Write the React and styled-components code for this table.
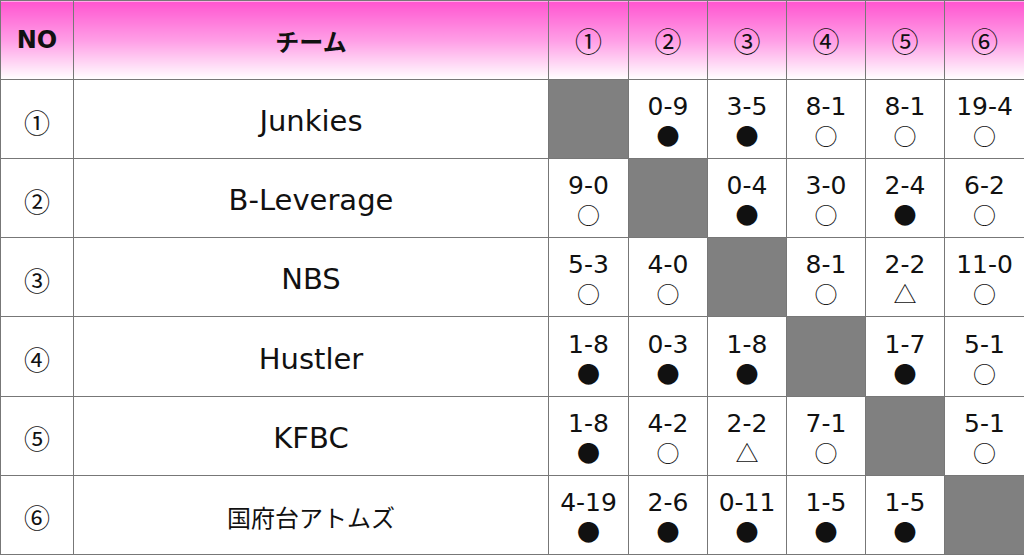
import React from 'react';
import styled, { createGlobalStyle } from 'styled-components';

const GlobalStyle = createGlobalStyle`
  body {
    margin: 0;
    background: #ffffff;
    font-family: "DejaVu Sans", "Noto Sans CJK JP", sans-serif;
  }
`;

const Table = styled.table`
  width: 1024px;
  height: 555px;
  border-collapse: collapse;
  table-layout: fixed;
  color: #111;
`;

const Col = styled.col`
  width: ${(p) => p.$w}px;
`;

const HeadCell = styled.th`
  height: 78px;
  border: 1px solid #777;
  background: linear-gradient(to bottom, #ff55d0 0%, #ff9ee6 50%, #ffffff 100%);
  font-family: ${(p) => (p.$latin ? '"DejaVu Sans"' : '"Noto Sans CJK JP"')}, sans-serif;
  font-size: ${(p) => (p.$num ? '27px' : '24px')};
  font-weight: ${(p) => (p.$num ? 400 : 700)};
  text-align: center;
  padding: 0;
`;

const Cell = styled.td`
  border: 1px solid #777;
  background: ${(p) => (p.$self ? '#808080' : '#ffffff')};
  text-align: center;
  padding: 4px 0 0;
  font-size: 29px;
`;

const NoCell = styled(Cell)`
  font-family: "Noto Sans CJK JP", sans-serif;
  font-size: 26px;
`;

const NameCell = styled(Cell)`
  font-size: ${(p) => (p.$jp ? '24px' : '29px')};
`;

const Score = styled.div`
  font-size: 25px;
  line-height: 29px;
`;

const Mark = styled.div`
  font-family: "Noto Sans CJK JP", sans-serif;
  font-size: 23px;
  line-height: 29px;
`;

const nums = ['①', '②', '③', '④', '⑤', '⑥'];
const widths = [73, 475, 80, 79, 79, 79, 79, 80];

const teams = [
  { name: 'Junkies', res: [null, ['0-9', '●'], ['3-5', '●'], ['8-1', '○'], ['8-1', '○'], ['19-4', '○']] },
  { name: 'B-Leverage', res: [['9-0', '○'], null, ['0-4', '●'], ['3-0', '○'], ['2-4', '●'], ['6-2', '○']] },
  { name: 'NBS', res: [['5-3', '○'], ['4-0', '○'], null, ['8-1', '○'], ['2-2', '△'], ['11-0', '○']] },
  { name: 'Hustler', res: [['1-8', '●'], ['0-3', '●'], ['1-8', '●'], null, ['1-7', '●'], ['5-1', '○']] },
  { name: 'KFBC', res: [['1-8', '●'], ['4-2', '○'], ['2-2', '△'], ['7-1', '○'], null, ['5-1', '○']] },
  { name: '国府台アトムズ', jp: true, res: [['4-19', '●'], ['2-6', '●'], ['0-11', '●'], ['1-5', '●'], ['1-5', '●'], null] },
];

export default function App() {
  return (
    <>
      <GlobalStyle />
      <Table>
        <colgroup>
          {widths.map((w, i) => (
            <Col key={i} $w={w} />
          ))}
        </colgroup>
        <thead>
          <tr>
            <HeadCell $latin>NO</HeadCell>
            <HeadCell>チーム</HeadCell>
            {nums.map((n) => (
              <HeadCell key={n} $num>{n}</HeadCell>
            ))}
          </tr>
        </thead>
        <tbody>
          {teams.map((t, i) => (
            <tr key={t.name}>
              <NoCell>{nums[i]}</NoCell>
              <NameCell $jp={t.jp}>{t.name}</NameCell>
              {t.res.map((r, j) =>
                r ? (
                  <Cell key={j}>
                    <Score>{r[0]}</Score>
                    <Mark>{r[1]}</Mark>
                  </Cell>
                ) : (
                  <Cell key={j} $self />
                )
              )}
            </tr>
          ))}
        </tbody>
      </Table>
    </>
  );
}
